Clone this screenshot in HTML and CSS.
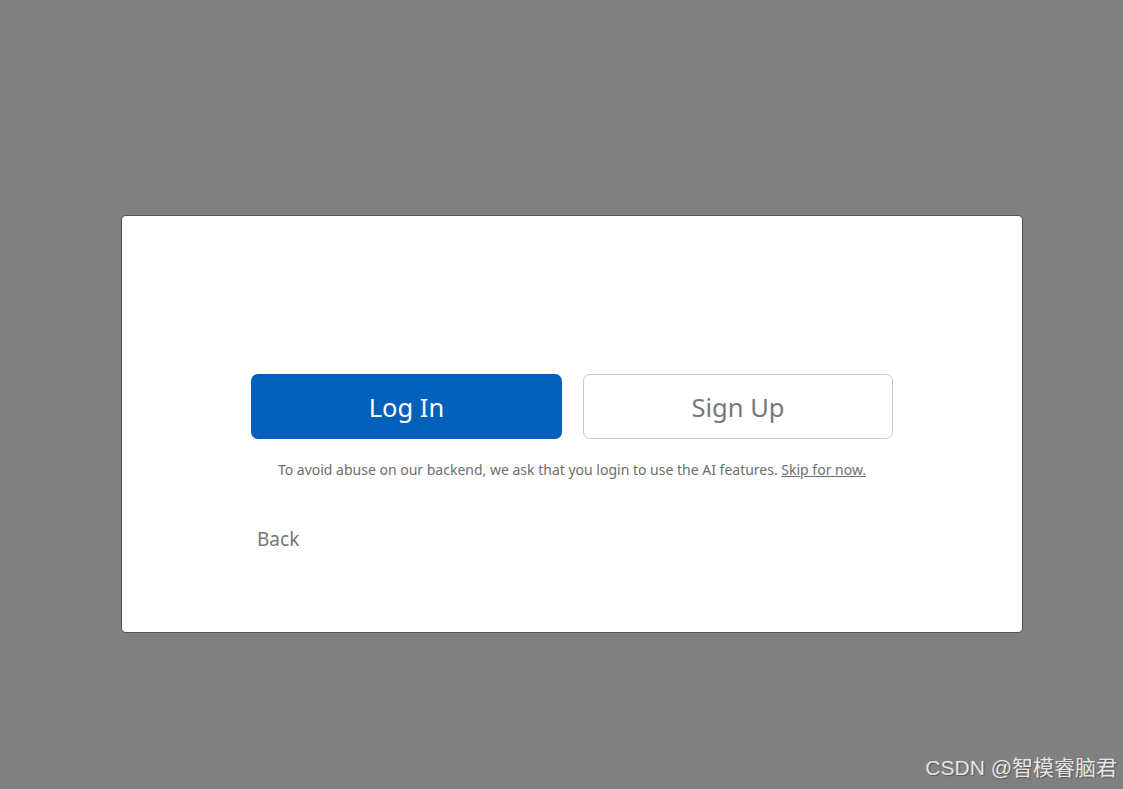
FILE: index.html
```html
<!DOCTYPE html>
<html lang="en">
<head>
<meta charset="utf-8">
<title>Login</title>
<link rel="stylesheet" href="styles.css">
</head>
<body>
<div class="overlay">
  <div class="dialog">
    <div class="actions">
      <button class="btn btn-primary">Log In</button>
      <button class="btn btn-secondary">Sign Up</button>
    </div>
    <p class="note">To avoid abuse on our backend, we ask that you login to use the AI features. <a href="#" class="skip">Skip for now.</a></p>
    <div class="back-row"><a href="#" class="back">Back</a></div>
  </div>
</div>
<div class="watermark">CSDN @智模睿脑君</div>
</body>
</html>
```
FILE: styles.css
```css
html, body {
  margin: 0;
  padding: 0;
  height: 100%;
}
body {
  background: #808080;
  font-family: "Noto Sans", "Open Sans", sans-serif;
  overflow: hidden;
}
.overlay {
  padding-top: 215px;
  padding-left: 121px;
}
.dialog {
  box-sizing: border-box;
  width: 902px;
  height: 418px;
  background: #fff;
  border: 1px solid #555;
  border-radius: 5px;
  padding: 158px 129px 0;
}
.actions {
  display: flex;
  gap: 21px;
}
.btn {
  box-sizing: border-box;
  height: 65px;
  width: 311px;
  border-radius: 7px;
  font-family: inherit;
  font-size: 25.5px;
  cursor: pointer;
}
.btn-primary {
  background: #0060ba;
  color: #fff;
  border: none;
}
.btn-secondary {
  width: 310px;
  background: #fff;
  color: #787878;
  border: 1px solid #c8c8c8;
}
.note {
  margin: 21px 0 0;
  text-align: center;
  font-size: 14px;
  color: #6e6e6e;
}
.skip {
  color: #6e6e6e;
  text-decoration: underline;
}
.back-row {
  margin-top: 47px;
  padding-left: 6px;
}
.back {
  font-size: 19px;
  color: #767676;
  text-decoration: none;
}
.watermark {
  position: absolute;
  right: 6px;
  bottom: 8px;
  font-family: "Liberation Sans", "Noto Sans CJK SC", sans-serif;
  font-size: 21px;
  color: #e6e6e6;
  text-shadow: 1px 1px 1px #555;
}
```
